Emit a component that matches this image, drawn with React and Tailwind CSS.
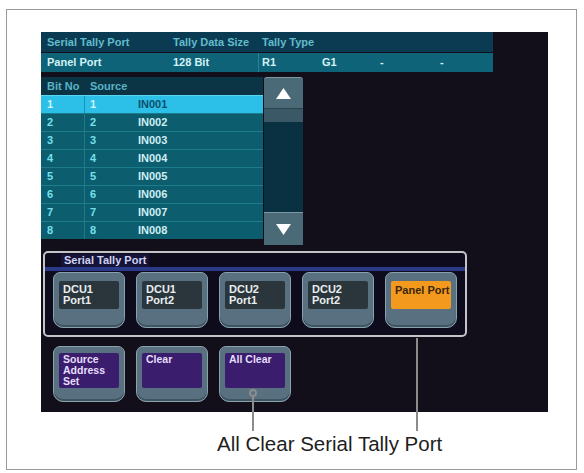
import React from "react";

const F = { fontFamily: '"Liberation Sans", Arial, sans-serif' };

function PortButton({ l1, l2, variant = "gray" }) {
  const inner =
    variant === "orange"
      ? "bg-[#f39a1e] text-[#3a2608]"
      : "bg-[#2b363c] text-[#e8eef0]";
  return (
    <div className="w-[72px] h-[56px] rounded-t-[7px] rounded-b-[10px] bg-[#587080] border border-[#8aa2ae] shadow-[inset_0_-2px_0_#3e5460] px-[5px] pt-[8px]">
      <div className={`h-[28px] rounded-[2px] px-[4px] pt-[3px] text-[11px] leading-[11px] font-bold ${inner}`}>
        {variant === "orange" ? (
          <div className="text-center pt-[1px] whitespace-nowrap">{l1}</div>
        ) : (
          <>
            <div>{l1}</div>
            {l2 && <div>{l2}</div>}
          </>
        )}
      </div>
    </div>
  );
}

function PurpleButton({ lines }) {
  return (
    <div className="w-[72px] h-[56px] rounded-t-[7px] rounded-b-[10px] bg-[#587080] border border-[#8aa2ae] shadow-[inset_0_-2px_0_#3e5460] px-[5px] pt-[6px]">
      <div className="h-[35px] rounded-[2px] px-[4px] pt-[1px] text-[10.5px] leading-[11px] font-bold bg-[#3b1d6e] text-[#e6defa] whitespace-nowrap">
        {lines.map((t) => (
          <div key={t}>{t}</div>
        ))}
      </div>
    </div>
  );
}

export default function App() {
  const rows = [1, 2, 3, 4, 5, 6, 7, 8];
  return (
    <div className="relative w-[584px] h-[473px] bg-white overflow-hidden" style={F}>
      <div className="ml-[6px] mt-[9px] w-[571px] h-[461px] border border-[#9a9a9a] pl-[34px] pt-[22px]">
        {/* Screen */}
        <div className="w-[507px] h-[380px] bg-[#130f1a] flex flex-col">
          {/* Header table */}
          <div className="w-[452px] text-[11px] font-bold">
            <div className="h-[20px] bg-[#0b3b52] text-[#62bccc] flex items-center whitespace-nowrap">
              <span className="ml-[6px] w-[126px]">Serial Tally Port</span>
              <span className="w-[89px]">Tally Data Size</span>
              <span>Tally Type</span>
            </div>
            <div className="h-[19px] mt-[1px] bg-[#0e6378] text-[#d4f2f6] flex items-center">
              <span className="ml-[6px] w-[126px]">Panel Port</span>
              <span className="w-[85px]">128 Bit</span>
              <span className="w-[1px] h-full bg-[#2a8296] mr-[3px]"></span>
              <span className="w-[60px]">R1</span>
              <span className="w-[58px]">G1</span>
              <span className="w-[60px]">-</span>
              <span>-</span>
            </div>
          </div>

          {/* List + scroll */}
          <div className="flex mt-[5px]">
            <div className="w-[222px] text-[11px] font-bold">
              <div className="h-[18px] bg-[#0b3545] text-[#58b4c8] flex items-center">
                <span className="ml-[6px] w-[43px]">Bit No</span>
                <span>Source</span>
              </div>
              {rows.map((n) => {
                const sel = n === 1;
                return (
                  <div
                    key={n}
                    className={`h-[18px] flex items-center border-t ${
                      sel ? "bg-[#2cc0e8] border-[#58d4f4]" : "bg-[#0c5d6d] border-[#1d7c8c]"
                    }`}
                  >
                    <span className={`pl-[6px] w-[44px] h-full flex items-center border-r ${sel ? "border-[#1a90b8] text-[#d0f6ff]" : "border-[#1d7c8c] text-[#74e0f0]"}`}>
                      {n}
                    </span>
                    <span className={`pl-[5px] w-[53px] ${sel ? "text-[#d0f6ff]" : "text-[#74e0f0]"}`}>{n}</span>
                    <span className={sel ? "text-[#0f4d6c]" : "text-[#cdeef4]"}>IN00{n}</span>
                  </div>
                );
              })}
            </div>
            {/* Scroll column */}
            <div className="ml-[1px] w-[39px] flex flex-col">
              <div className="h-[31px] rounded-t-[3px] bg-[#4a6a78] border-t border-[#7e98a4] flex items-center justify-center">
                <svg width="15" height="11" viewBox="0 0 15 11">
                  <polygon points="7.5,0 15,11 0,11" fill="#ffffff" />
                </svg>
              </div>
              <div className="h-[14px] bg-[#3a5866] border-t border-[#2a4450]"></div>
              <div className="h-[90px] bg-[#0a3142]"></div>
              <div className="h-[33px] bg-[#4a6a78] border-t border-[#7e98a4] flex items-center justify-center">
                <svg width="15" height="11" viewBox="0 0 15 11">
                  <polygon points="0,0 15,0 7.5,11" fill="#ffffff" />
                </svg>
              </div>
            </div>
          </div>

          {/* Group */}
          <div className="ml-[2px] mt-[6px] w-[424px] h-[86px] rounded-[5px] border-2 border-[#c4c4c8] bg-[#0d0b1c] flex flex-col">
            <div className="h-[18px] flex flex-col">
              <div className="h-[14px] flex items-end">
                <span className="ml-[16px] px-[3px] text-[11px] font-bold text-[#cfd4f2] bg-[#161338] leading-[13px]">Serial Tally Port</span>
              </div>
              <div className="h-[4px] bg-[#2a3a88]"></div>
            </div>
            <div className="flex gap-[11px] pl-[8px] pt-[1px]">
              <PortButton l1="DCU1" l2="Port1" />
              <PortButton l1="DCU1" l2="Port2" />
              <PortButton l1="DCU2" l2="Port1" />
              <PortButton l1="DCU2" l2="Port2" />
              <PortButton l1="Panel Port" variant="orange" />
            </div>
          </div>

          {/* Bottom buttons */}
          <div className="flex gap-[11px] ml-[12px] mt-[9px]">
            <PurpleButton lines={["Source", "Address", "Set"]} />
            <PurpleButton lines={["Clear"]} />
            <PurpleButton lines={["All Clear"]} />
          </div>
        </div>

        {/* Caption */}
        <div className="mt-[22px] ml-[176px] text-[20.5px] leading-[20px] text-[#1e1e1e] whitespace-nowrap">
          All Clear Serial Tally Port
        </div>
      </div>

      {/* Callout lines */}
      <div className="absolute left-[252px] top-[396px] w-[2px] h-[35px] bg-[#8c8c8c]"></div>
      <div className="absolute left-[249px] top-[389px] w-[8px] h-[8px] rounded-full border-2 border-[#8c8c8c] bg-[#587080]"></div>
      <div className="absolute left-[416px] top-[338px] w-[2px] h-[93px] bg-[#8c8c8c]"></div>
    </div>
  );
}
